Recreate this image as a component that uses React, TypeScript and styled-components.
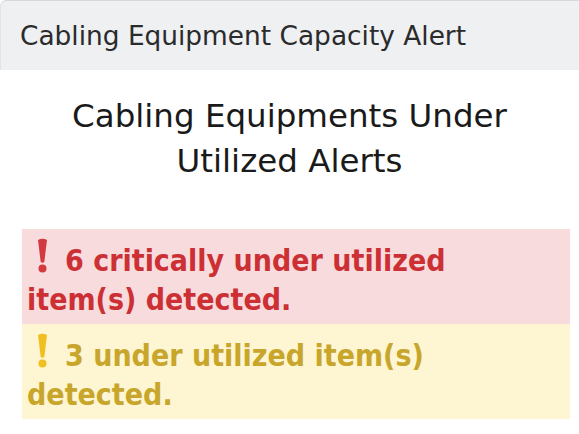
import React from 'react';
import styled, { createGlobalStyle } from 'styled-components';

const GlobalStyle = createGlobalStyle`
  html, body {
    margin: 0;
    padding: 0;
    background: #ffffff;
  }
  body {
    font-family: "DejaVu Sans", sans-serif;
  }
`;

const Panel = styled.div`
  width: 579px;
  height: 434px;
  overflow: hidden;
  background: #ffffff;
`;

const Header = styled.div`
  height: 69px;
  display: flex;
  align-items: center;
  padding-left: 19px;
  background: #eef0f2;
  border-top: 1px solid #d6d8db;
  border-left: 1px solid #e2e4e7;
  border-top-left-radius: 6px;
  color: #2b2b2b;
  font-size: 26.4px;
`;

const Title = styled.h2`
  margin: 24px 0 45px;
  text-align: center;
  font-weight: normal;
  font-size: 32.5px;
  line-height: 45px;
  color: #1a1a1a;
`;

const AlertList = styled.div`
  width: 548px;
  margin-left: 22px;
`;

const Alert = styled.div<{ $tone: 'danger' | 'warning' }>`
  padding: 9px 40px 5px 5px;
  font-family: "DejaVu Sans Condensed", "DejaVu Sans", sans-serif;
  font-weight: bold;
  font-size: 30px;
  line-height: 39px;
  background: ${({ $tone }) => ($tone === 'danger' ? '#f8dcdd' : '#fef5d2')};
  color: ${({ $tone }) => ($tone === 'danger' ? '#cc3035' : '#c8a62c')};
`;

const Bang = styled.svg`
  width: 11px;
  height: 35px;
  margin: 0 17px 0 10px;
  vertical-align: -2px;
`;

const Exclaim = ({ color }: { color: string }) => (
  <Bang viewBox="0 0 11 35">
    <path d="M1 2 Q5.5 -0.5 10 2 L7.3 24 Q5.5 25.5 3.7 24 Z" fill={color} />
    <circle cx="5.5" cy="30.5" r="4" fill={color} />
  </Bang>
);

export default function App() {
  return (
    <>
      <GlobalStyle />
      <Panel>
        <Header>Cabling Equipment Capacity Alert</Header>
        <Title>
          Cabling Equipments Under
          <br />
          Utilized Alerts
        </Title>
        <AlertList>
          <Alert $tone="danger">
            <Exclaim color="#d33a3f" />6 critically under utilized item(s) detected.
          </Alert>
          <Alert $tone="warning">
            <Exclaim color="#f0c020" />3 under utilized item(s) detected.
          </Alert>
        </AlertList>
      </Panel>
    </>
  );
}
